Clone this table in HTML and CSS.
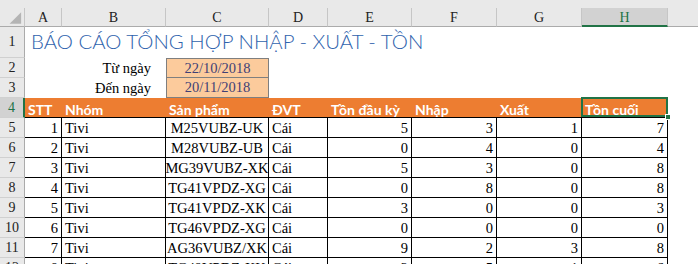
FILE: index.html
```html
<!DOCTYPE html>
<html lang="vi">
<head>
  <meta charset="UTF-8">
  <title>Báo cáo tổng hợp nhập - xuất - tồn</title>
  <link rel="stylesheet" href="styles.css">
</head>
<body>
  <div class="sheet">
    <div class="topbar"></div>
    <div class="grid">
      <!-- column letters -->
      <div class="corner">
        <svg width="25" height="19" viewBox="0 0 25 19"><polygon points="22,4 22,16 10,16" fill="#b4b4b4"/></svg>
      </div>
      <div class="colhead">A</div>
      <div class="colhead">B</div>
      <div class="colhead">C</div>
      <div class="colhead">D</div>
      <div class="colhead">E</div>
      <div class="colhead">F</div>
      <div class="colhead">G</div>
      <div class="colhead active">H</div>
      <div class="colhead">I</div>

      <!-- row 1 -->
      <div class="rowhead tall">1</div>
      <div class="title">BÁO CÁO TỔNG HỢP NHẬP - XUẤT - TỒN</div>

      <!-- rows 2-3 -->
      <div class="rowhead">2</div>
      <div class="blank"></div>
      <div class="label">Từ ngày</div>
      <div class="input first">22/10/2018</div>
      <div class="blank wide"></div>

      <div class="rowhead">3</div>
      <div class="blank"></div>
      <div class="label">Đến ngày</div>
      <div class="input">20/11/2018</div>
      <div class="blank wide"></div>

      <!-- row 4: table header -->
      <div class="rowhead active">4</div>
      <div class="th">STT</div>
      <div class="th">Nhóm</div>
      <div class="th">Sản phẩm</div>
      <div class="th">ĐVT</div>
      <div class="th">Tồn đầu kỳ</div>
      <div class="th">Nhập</div>
      <div class="th">Xuất</div>
      <div class="th selected">Tồn cuối</div>
      <div class="blank"></div>

      <!-- data -->
      <div class="rowhead">5</div>
      <div class="td num">1</div><div class="td">Tivi</div><div class="td center">M25VUBZ-UK</div><div class="td">Cái</div>
      <div class="td num">5</div><div class="td num">3</div><div class="td num">1</div><div class="td num">7</div><div class="blank"></div>

      <div class="rowhead">6</div>
      <div class="td num">2</div><div class="td">Tivi</div><div class="td center">M28VUBZ-UB</div><div class="td">Cái</div>
      <div class="td num">0</div><div class="td num">4</div><div class="td num">0</div><div class="td num">4</div><div class="blank"></div>

      <div class="rowhead">7</div>
      <div class="td num">3</div><div class="td">Tivi</div><div class="td center">MG39VUBZ-XK</div><div class="td">Cái</div>
      <div class="td num">5</div><div class="td num">3</div><div class="td num">0</div><div class="td num">8</div><div class="blank"></div>

      <div class="rowhead">8</div>
      <div class="td num">4</div><div class="td">Tivi</div><div class="td center">TG41VPDZ-XG</div><div class="td">Cái</div>
      <div class="td num">0</div><div class="td num">8</div><div class="td num">0</div><div class="td num">8</div><div class="blank"></div>

      <div class="rowhead">9</div>
      <div class="td num">5</div><div class="td">Tivi</div><div class="td center">TG41VPDZ-XK</div><div class="td">Cái</div>
      <div class="td num">3</div><div class="td num">0</div><div class="td num">0</div><div class="td num">3</div><div class="blank"></div>

      <div class="rowhead">10</div>
      <div class="td num">6</div><div class="td">Tivi</div><div class="td center">TG46VPDZ-XG</div><div class="td">Cái</div>
      <div class="td num">0</div><div class="td num">0</div><div class="td num">0</div><div class="td num">0</div><div class="blank"></div>

      <div class="rowhead">11</div>
      <div class="td num">7</div><div class="td">Tivi</div><div class="td center">AG36VUBZ/XK</div><div class="td">Cái</div>
      <div class="td num">9</div><div class="td num">2</div><div class="td num">3</div><div class="td num">8</div><div class="blank"></div>

      <div class="rowhead">12</div>
      <div class="td num">8</div><div class="td">Tivi</div><div class="td center">TG49VPDZ-XK</div><div class="td">Cái</div>
      <div class="td num">2</div><div class="td num">5</div><div class="td num">1</div><div class="td num">6</div><div class="blank"></div>
    </div>
  </div>
</body>
</html>
```

FILE: styles.css
```css
/* sheet view */

body {
  margin: 0;
  overflow: hidden;
  background-color: #fff;
  font-family: "Liberation Serif", "Times New Roman", serif;
  font-size: 14.5px;
  color: #000;
}

.sheet {
  width: 760px;
}

.topbar {
  height: 8px;
  background-color: #e9e9e9;
}

.grid {
  display: grid;
  grid-template-columns: 25px 37px 104px 103px 59px 84px 85px 85px 86px 92px;
  grid-template-rows: 19px 31px repeat(11, 20px);
}

.grid > div {
  box-sizing: border-box;
  display: flex;
  align-items: center;
  white-space: nowrap;
  overflow: hidden;
}

/* headers */

.corner {
  background-color: #e9e9e9;
  border-right: 1px solid #c6c6c6;
  border-bottom: 1px solid #ababab;
}

.colhead {
  justify-content: center;
  background-color: #e9e9e9;
  border-right: 1px solid #c6c6c6;
  border-bottom: 1px solid #ababab;
  color: #222;
  font-size: 14px;
  padding-top: 2px;
}

.colhead.active {
  background-color: #d2d2d2;
  color: #217346;
  border-bottom: 2px solid #217346;
}

.rowhead {
  justify-content: center;
  background-color: #e9e9e9;
  border-right: 1px solid #ababab;
  border-bottom: 1px solid #d0d0d0;
  color: #222;
  font-size: 14px;
}

.rowhead.active {
  background-color: #d2d2d2;
  color: #217346;
  border-right: 2px solid #217346;
}

/* report title */

.title {
  grid-column: 2 / -1;
  align-items: flex-end !important;
  padding: 0 0 5px 6px;
  font-family: Lato, "Liberation Sans", sans-serif;
  font-weight: 300;
  font-size: 20.4px;
  color: #2f63ad;
  overflow: visible !important;
}

/* date range */

.blank.wide {
  grid-column: span 6;
}

.label {
  justify-content: flex-end;
  padding-right: 15px;
}

.input {
  justify-content: center;
  background-color: #fccb9c;
  border: 1px solid #7f7f7f;
  border-top: none;
  color: #3f3f76;
}

.input.first {
  border-top: 1px solid #7f7f7f;
}

/* table */

.th {
  background-color: #ed7d31;
  border-bottom: 1px solid #000;
  color: #fff;
  font-family: Lato, "Liberation Sans", sans-serif;
  font-weight: 700;
  font-size: 14px;
  padding: 3px 0 0 3px;
}

.th.selected {
  position: relative;
  overflow: visible !important;
}

.th.selected::after {
  content: "";
  position: absolute;
  left: -1px;
  top: -1px;
  right: 0;
  bottom: 0;
  border: 2px solid #217346;
}

.th.selected::before {
  content: "";
  position: absolute;
  right: -3px;
  bottom: -3px;
  width: 6px;
  height: 6px;
  background-color: #217346;
  border: 1px solid #fff;
  box-sizing: border-box;
  z-index: 1;
}

.td {
  border-right: 1px solid #000;
  border-bottom: 1px solid #000;
  padding: 1px 2px 0 3px;
}

.td.num {
  justify-content: flex-end;
  padding-right: 3px;
}

.td.center {
  justify-content: center;
  padding: 1px 0 0 0;
}
```
